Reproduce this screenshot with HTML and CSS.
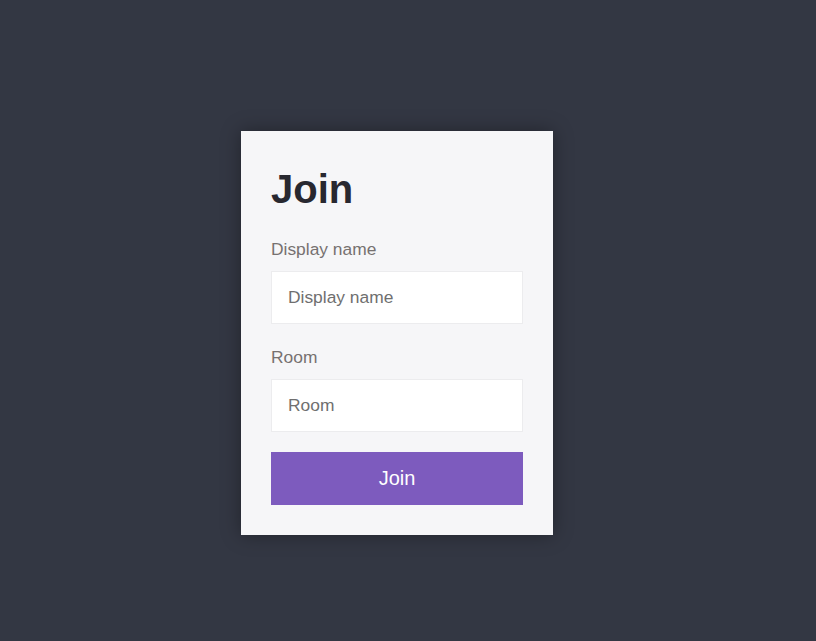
FILE: index.html
```html
<!DOCTYPE html>
<html lang="en">
<head>
    <meta charset="UTF-8">
    <meta name="viewport" content="width=device-width, initial-scale=1.0">
    <title>Join</title>
    <link rel="stylesheet" href="styles.css">
</head>
<body>
    <div class="card">
        <h1>Join</h1>
        <form id="joinForm">
            <label for="display-name">Display name</label>
            <input type="text" id="display-name" placeholder="Display name" />

            <label for="room" class="room-label">Room</label>
            <input type="text" id="room" placeholder="Room" />

            <button type="button" id="joinButton">Join</button>
        </form>
    </div>
</body>
</html>
```

FILE: styles.css
```css
html, body {
    height: 100%;
}

body {
    font-family: "Liberation Sans", Arial, sans-serif;
    margin: 0;
    padding: 25px 22px 0 0;
    box-sizing: border-box;
    background-color: #333743;
    display: flex;
    align-items: center;
    justify-content: center;
}

.card {
    width: 312px;
    box-sizing: border-box;
    padding: 30px;
    background: #f6f6f8;
    box-shadow: 0 0 18px rgba(0, 0, 0, 0.35);
}

h1 {
    font-size: 40px;
    line-height: 46px;
    font-weight: bold;
    color: #282830;
    margin: 5px 0 27px;
}

label {
    display: block;
    font-size: 17.4px;
    line-height: 21px;
    color: #767170;
    margin-bottom: 11px;
}

.room-label {
    margin-top: 23px;
}

input[type="text"] {
    display: block;
    width: 100%;
    height: 53px;
    box-sizing: border-box;
    padding: 0 16px;
    border: 1px solid #ececee;
    background: #fff;
    font-family: inherit;
    font-size: 17.4px;
    color: #333;
    outline: none;
}

input::placeholder {
    color: #6f6f6f;
}

button {
    display: block;
    width: 100%;
    height: 53px;
    margin-top: 20px;
    border: none;
    background-color: #7d5bbe;
    color: #fff;
    font-family: inherit;
    font-size: 20px;
    cursor: pointer;
}
```
